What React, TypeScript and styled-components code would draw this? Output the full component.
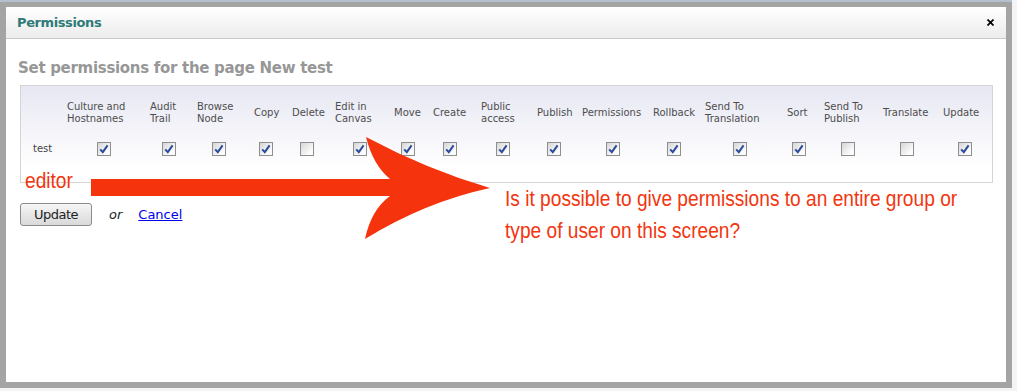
import React from 'react'
import styled, { createGlobalStyle } from 'styled-components'

const GlobalStyle = createGlobalStyle`
  body {
    margin: 0;
    background: #f4f4f4;
    font-family: 'DejaVu Sans', Verdana, sans-serif;
  }
`

// outer grey window chrome round the modal
const Frame = styled.div`
  position: relative;
  box-sizing: border-box;
  width: 1012px;
  height: 388px;
  padding: 5px 6px 6px 6px;
  border-top: 2px solid #b4c0cd;
  background: #a4a4a4;
`

const Dialog = styled.div`
  display: flex;
  flex-direction: column;
  width: 1000px;
  height: 375px;
  background: #fff;
`

const TitleBar = styled.div`
  display: flex;
  align-items: center;
  justify-content: space-between;
  height: 31px;
  padding: 0 12px 0 11px;
  border-bottom: 1px solid #c8c8c8;
  background: linear-gradient(#ffffff, #ececec);
`

const DialogTitle = styled.span`
  font-size: 13px;
  font-weight: bold;
  letter-spacing: -0.4px;
  color: #2e7b78;
`

const Close = styled.svg`
  display: block;
  width: 7px;
  height: 7px;
`

const Body = styled.div`
  padding: 19px 12px 0;
`

const Heading = styled.h2`
  margin: 0;
  font-size: 15px;
  line-height: 20px;
  font-weight: bold;
  letter-spacing: -0.3px;
  color: #979797;
`

const PermissionBox = styled.div<{ $cols: string }>`
  display: grid;
  grid-template-columns: ${p => p.$cols};
  grid-template-rows: 53px 20px;
  box-sizing: border-box;
  width: 973px;
  margin: 7px 0 0 2px;
  padding-bottom: 23px;
  border: 1px solid #d4d4d4;
  background: linear-gradient(#e7e7f3, #ffffff 85%);
`

const HeaderCell = styled.div`
  align-self: center;
  font-size: 10px;
  line-height: 12px;
  color: #4d4d4d;
`

const RowLabel = styled.div`
  align-self: center;
  padding-left: 12px;
  font-size: 10px;
  line-height: 12px;
  color: #444;
`

const CheckCell = styled.div<{ $offset: number }>`
  align-self: center;
  margin-left: ${p => p.$offset}px;
`

const Box = styled.span`
  display: block;
  box-sizing: border-box;
  width: 14px;
  height: 14px;
  border: 1px solid #8e8e8e;
  background: linear-gradient(135deg, #d6d6d6, #fbfbfb 75%);
`

const Tick = styled.svg`
  display: block;
  width: 12px;
  height: 12px;
`

const Actions = styled.div`
  display: flex;
  align-items: center;
  margin: 20px 0 0 2px;
  font-size: 13px;
`

const UpdateButton = styled.button`
  box-sizing: border-box;
  width: 72px;
  height: 23px;
  padding: 0;
  border: 1px solid #8c8c8c;
  border-radius: 3px;
  background: linear-gradient(#f6f6f6, #d9d9d9);
  font-family: 'DejaVu Sans', Verdana, sans-serif;
  font-size: 13px;
  letter-spacing: -0.5px;
  color: #222;
`

const Or = styled.span`
  margin-left: 17px;
  font-style: italic;
  color: #222;
`

const CancelLink = styled.a`
  margin-left: 16px;
  color: #0000ee;
  text-decoration: underline;
`

// the red scribbles someone drew on top of the screenshot
const Overlay = styled.div`
  position: absolute;
  inset: 0;
  pointer-events: none;
`

const ArrowSvg = styled.svg`
  position: absolute;
  left: 0;
  top: 0;
  width: 1012px;
  height: 388px;
`

const Note = styled.div<{ $x: number; $y: number }>`
  position: absolute;
  left: ${p => p.$x}px;
  top: ${p => p.$y}px;
  font-family: 'Liberation Sans', Arial, sans-serif;
  font-size: 22px;
  line-height: 32px;
  color: #f2360f;
  white-space: nowrap;
  transform: scaleX(0.87);
  transform-origin: left top;
`

interface Column {
  lines: string[]
  w: number
  cb: number
  on: boolean
}

const columns: Column[] = [
  { lines: ['Culture and', 'Hostnames'], w: 83, cb: 30, on: true },
  { lines: ['Audit', 'Trail'], w: 47, cb: 12, on: true },
  { lines: ['Browse', 'Node'], w: 57, cb: 15, on: true },
  { lines: ['Copy'], w: 38, cb: 5, on: true },
  { lines: ['Delete'], w: 43, cb: 8, on: false },
  { lines: ['Edit in', 'Canvas'], w: 59, cb: 18, on: true },
  { lines: ['Move'], w: 39, cb: 7, on: true },
  { lines: ['Create'], w: 48, cb: 10, on: true },
  { lines: ['Public', 'access'], w: 56, cb: 15, on: true },
  { lines: ['Publish'], w: 45, cb: 10, on: true },
  { lines: ['Permissions'], w: 71, cb: 24, on: true },
  { lines: ['Rollback'], w: 52, cb: 14, on: true },
  { lines: ['Send To', 'Translation'], w: 82, cb: 28, on: true },
  { lines: ['Sort'], w: 37, cb: 5, on: true },
  { lines: ['Send To', 'Publish'], w: 59, cb: 17, on: false },
  { lines: ['Translate'], w: 60, cb: 17, on: false },
  { lines: ['Update'], w: 49, cb: 15, on: true },
]

const Checkbox = ({ on }: { on: boolean }) => (
  <Box>
    {on && (
      <Tick viewBox="0 0 12 12">
        <path d="M2.2 6.4 L4.8 9.2 L9.6 2.4" fill="none" stroke="#2c4b9d" strokeWidth="2" />
      </Tick>
    )}
  </Box>
)

export default function App() {
  const cols = ['46px', ...columns.map(c => `${c.w}px`)].join(' ')

  return (
    <>
      <GlobalStyle />
      <Frame>
        <Dialog>
          <TitleBar>
            <DialogTitle>Permissions</DialogTitle>
            <Close viewBox="0 0 7 7">
              <path d="M0.5 0.5 L6.5 6.5 M6.5 0.5 L0.5 6.5" stroke="#000" strokeWidth="1.7" />
            </Close>
          </TitleBar>

          <Body>
            <Heading>Set permissions for the page New test</Heading>

            <PermissionBox $cols={cols}>
              <div />
              {columns.map(c => (
                <HeaderCell key={c.lines.join(' ')}>
                  {c.lines.map((l, i) => (
                    <div key={i}>{l}</div>
                  ))}
                </HeaderCell>
              ))}

              <RowLabel>test</RowLabel>
              {columns.map(c => (
                <CheckCell key={c.lines.join(' ')} $offset={c.cb}>
                  <Checkbox on={c.on} />
                </CheckCell>
              ))}
            </PermissionBox>

            <Actions>
              <UpdateButton>Update</UpdateButton>
              <Or>or</Or>
              <CancelLink href="#">Cancel</CancelLink>
            </Actions>
          </Body>
        </Dialog>

        <Overlay>
          <ArrowSvg viewBox="0 0 1012 388">
            <path
              d="M91 177 L390 177 Q373 163 366 135 Q428 168 490 186 Q425 200 365 237 Q371 208 390 194 L91 194 Z"
              fill="#f5330d"
            />
          </ArrowSvg>
          <Note $x={25} $y={163}>editor</Note>
          <Note $x={505} $y={181}>
            Is it possible to give permissions to an entire group or
            <br />
            type of user on this screen?
          </Note>
        </Overlay>
      </Frame>
    </>
  )
}
